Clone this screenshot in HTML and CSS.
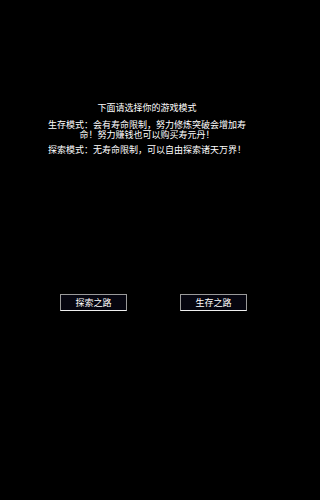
FILE: index.html
```html
<!DOCTYPE html>
<html lang="zh-CN">
<head>
<meta charset="utf-8">
<link rel="stylesheet" href="styles.css">
</head>
<body>
<div class="panel">
  <div class="title">下面请选择你的游戏模式</div>
  <div class="desc first">生存模式：会有寿命限制，努力修炼突破会增加寿命！努力赚钱也可以购买寿元丹！</div>
  <div class="desc second">探索模式：无寿命限制，可以自由探索诸天万界！</div>
  <div class="actions">
    <button class="btn">探索之路</button>
    <button class="btn">生存之路</button>
  </div>
</div>
</body>
</html>
```
FILE: styles.css
```css
html, body {
  margin: 0;
  padding: 0;
  background: #000;
  height: 100%;
}
body {
  font-family: "Noto Sans CJK SC", "Noto Sans", sans-serif;
  font-size: 9px;
  color: #fff;
}
.panel {
  width: 200px;
  margin-left: 47px;
  padding-top: 103px;
  text-align: center;
  line-height: 9.5px;
}
.title {
  height: 10px;
  line-height: 10px;
}
.desc.first {
  margin-top: 7px;
}
.desc.second {
  margin-top: 6px;
}
.actions {
  margin-top: 139px;
  padding-left: 13px;
  display: flex;
  justify-content: space-between;
}
.btn {
  width: 67px;
  height: 17px;
  padding: 0;
  margin: 0;
  background: #05050f;
  color: #fff;
  font-family: inherit;
  font-size: 9px;
  line-height: 15px;
  border: 1px solid #9a9a9a;
  border-bottom-color: #f0f0f0;
  border-radius: 0;
}
```
